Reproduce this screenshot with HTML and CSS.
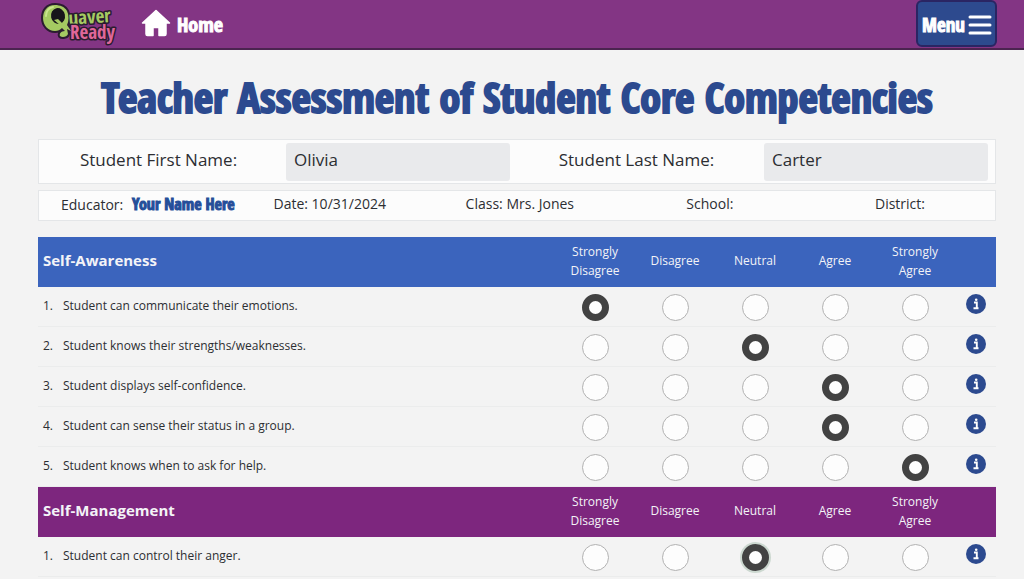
FILE: index.html
```html
<!DOCTYPE html>
<html lang="en">
<head>
<meta charset="utf-8">
<meta name="viewport" content="width=device-width, initial-scale=1">
<title>Teacher Assessment of Student Core Competencies</title>
<link rel="stylesheet" href="styles.css">
</head>
<body>
<header class="topbar">
  <nav class="brand-nav">
    <a class="logo" href="#" aria-label="Quaver Ready">
      <svg width="88" height="44" viewBox="0 0 88 44">
        <g fill="#2b1c30" stroke="#2b1c30" stroke-width="4" stroke-linejoin="round">
          <path d="M15 3C7 3 3 9 3 16S8 29 15 29C18 29 20 28 22 26L25 29C21 29 19 32 20 34C22 36 27 35 28 32L27 27L34 31L27 23C29 19 29 13 27 9C25 5 20 3 15 3Z"/>
        </g>
        <g class="logo-word" stroke="#2b1c30" stroke-width="3" stroke-linejoin="round">
          <text x="29" y="23" font-size="19" fill="#a5ca62" transform="rotate(-4 29 23)">uaver</text>
          <text x="30" y="37" font-size="19" fill="#df6799">Ready</text>
        </g>
        <path d="M15 3C7 3 3 9 3 16S8 29 15 29C18 29 20 28 22 26L25 29C21 29 19 32 20 34C22 36 27 35 28 32L27 27L31 29L27 23C29 19 29 13 27 9C25 5 20 3 15 3Z" fill="#a5ca62"/>
        <ellipse cx="18" cy="14" rx="7" ry="8" fill="#17151a" transform="rotate(-12 18 14)"/>
        <path d="M14 18L18 17L24 23L21 24Z" fill="#a5ca62"/>
        <path d="M6 14C6 9 9 6 13 5" fill="none" stroke="#c9e58e" stroke-width="2" stroke-linecap="round"/>
      </svg>
    </a>
    <a class="home" href="#">
      <svg width="30" height="28" viewBox="0 0 30 28" aria-hidden="true">
        <path d="M15 1.500 28.500 14H25V25Q25 26.500 23.500 26.500H18V18.500H12V26.500H6.500Q5 26.500 5 25V14H1.500Z" fill="#fff" stroke="#fff" stroke-width="1.500" stroke-linejoin="round"/>
      </svg>
      <span>Home</span>
    </a>
  </nav>
  <button class="menu" type="button">Menu
    <svg width="24" height="22" viewBox="0 0 24 22" aria-hidden="true"><path d="M2 3H22M2 11H22M2 19H22" stroke="#fff" stroke-width="3" stroke-linecap="round"/></svg>
  </button>
</header>

<main class="page">
  <h1>Teacher Assessment of Student Core Competencies</h1>

  <form class="assessment">
    <div class="panel student">
      <label for="first">Student First Name:</label>
      <input id="first" type="text" value="Olivia">
      <label for="last">Student Last Name:</label>
      <input id="last" type="text" value="Carter">
    </div>
    <div class="panel details">
      <span class="educator">Educator: <a href="#">Your Name Here</a></span>
      <span>Date: 10/31/2024</span>
      <span>Class: Mrs. Jones</span>
      <span>School:</span>
      <span>District:</span>
    </div>
    <div id="sections"></div>
  </form>
</main>
<script src="script.js"></script>
</body>
</html>
```
FILE: styles.css
```css
* { box-sizing: border-box; }
body {
  margin: 0;
  background: #f3f3f3;
  color: #2c2e32;
  font-family: "Open Sans", "Noto Sans", sans-serif;
  font-size: 12px;
}
.topbar {
  display: flex;
  justify-content: space-between;
  align-items: flex-start;
  height: 50px;
  padding: 0 27px 0 40px;
  background: #833584;
  border-bottom: 2px solid #4b2450;
}
.topbar, h1, .educator a, .menu, .logo-word {
  font-family: "Liberation Sans Narrow", "Open Sans Condensed", "Liberation Sans", sans-serif;
  font-weight: 700;
}
.brand-nav { display: flex; align-items: center; gap: 13px; }
.logo, .home { display: flex; align-items: center; }
.home {
  gap: 6px;
  color: #fff;
  font-size: 20px;
  text-decoration: none;
  -webkit-text-stroke: 1px #fff;
}
.home span { padding-top: 3px; }
.logo { padding-top: 2px; }
.logo-word text { paint-order: stroke; }
.menu {
  display: flex;
  align-items: center;
  gap: 3px;
  height: 47px;
  padding: 2px 3px 0 4px;
  border: 2px solid #2a2563;
  border-radius: 6px;
  background: #2d4a8e;
  color: #fff;
  font-size: 19px;
  -webkit-text-stroke: 1px #fff;
}
.page { padding: 0 28px 0 38px; }
h1 {
  margin: 0;
  padding: 22px 0 17px;
  color: #2c4a8f;
  font-size: 42px;
  line-height: 50px;
  text-align: center;
  -webkit-text-stroke: 2px #2c4a8f;
}
.panel {
  background: #fcfcfc;
  border: 1px solid #e4e6e8;
  align-items: center;
  display: grid;
}
.student {
  grid-template-columns: repeat(4, 1fr);
  height: 45px;
  margin-bottom: 6px;
  font-size: 17px;
}
.student label { padding-bottom: 4px; text-align: center; }
.student input {
  width: auto;
  min-width: 0;
  height: 38px;
  margin: 0 7px 0 8px;
  padding: 0 8px 4px;
  border: 0;
  border-radius: 3px;
  background: #e9eaec;
  color: inherit;
  font: inherit;
}
.details {
  grid-template-columns: repeat(5, 1fr);
  height: 31px;
  margin-bottom: 16px;
  padding-bottom: 3px;
  font-size: 14px;
  line-height: 20px;
  text-align: center;
  white-space: nowrap;
}
.details .educator { padding-left: 22px; text-align: left; }
.educator a {
  margin-left: 5px;
  color: #254e99;
  font-size: 16px;
  text-decoration: none;
  -webkit-text-stroke: 1px #254e99;
}
.scale { width: 100%; border-spacing: 0; table-layout: fixed; }
.scale th, .scale td { padding: 0; }
.scale .choice { width: 80px; }
.scale .help { width: 41px; }
.scale thead { background: #3b64bd; color: #f3f3f7; }
.scale.management thead { background: #7d267e; }
.scale thead th { height: 50px; padding-bottom: 3px; font-weight: 400; line-height: 19px; }
.scale thead .topic { padding-left: 5px; font-size: 15px; font-weight: 700; text-align: left; }
.scale tbody th, .scale tbody td { height: 40px; border-bottom: 1px solid #ebecec; }
.scale tbody th { padding-bottom: 2px; font-weight: 400; text-align: left; }
.scale .number { display: inline-block; width: 20px; margin-left: 5px; }
.scale td { text-align: center; }
.scale td input {
  appearance: none;
  display: block;
  width: 27px;
  height: 27px;
  margin: 2px auto 0;
  border: 1px solid #b2b2b2;
  border-radius: 50%;
  background: #fdfdfd;
}
.scale td input:checked { border: 7px solid #424242; }
.scale td input.focused { box-shadow: 0 0 0 2px #ccd8d0; }
.scale td button {
  display: block;
  width: 20px;
  height: 20px;
  margin: 0 auto 5px;
  padding: 0;
  border: 0;
  background: none;
}
.scale td svg { display: block; }
```
FILE: script.js
```js
const choices = ["Strongly Disagree", "Disagree", "Neutral", "Agree", "Strongly Agree"];
const sections = [
  { name: "Self-Awareness", style: "awareness", items: [
    ["Student can communicate their emotions.", 0],
    ["Student knows their strengths/weaknesses.", 2],
    ["Student displays self-confidence.", 3],
    ["Student can sense their status in a group.", 3],
    ["Student knows when to ask for help.", 4]
  ] },
  { name: "Self-Management", style: "management", items: [
    ["Student can control their anger.", 2, true]
  ] }
];
const info = `<svg width="20" height="20" viewBox="0 0 20 20" aria-hidden="true"><circle cx="10" cy="10" r="10" fill="#2c4a8f"/><path d="M8 8.500H10.800V14M7.500 14.200H12.500" fill="none" stroke="#fff" stroke-width="1.900"/><circle cx="10.200" cy="5.700" r="1.300" fill="#fff"/></svg>`;

document.getElementById("sections").innerHTML = sections.map(s => `
<table class="scale ${s.style}">
  <thead><tr><th class="topic" scope="col">${s.name}</th>
  ${choices.map(c => `<th class="choice" scope="col">${c.replace(" ", "<br>")}</th>`).join("")}
  <th class="help"></th></tr></thead>
  <tbody>${s.items.map(([text, picked, focused], row) => `
    <tr><th scope="row"><span class="number">${row + 1}.</span>${text}</th>
    ${choices.map((c, i) => `<td><input type="radio" name="${s.style}-${row}" aria-label="${text} ${c}"${i === picked ? " checked" : ""}${focused && i === picked ? ' class="focused"' : ""}></td>`).join("")}
    <td><button type="button" aria-label="More information">${info}</button></td></tr>`).join("")}
  </tbody>
</table>`).join("");
```
